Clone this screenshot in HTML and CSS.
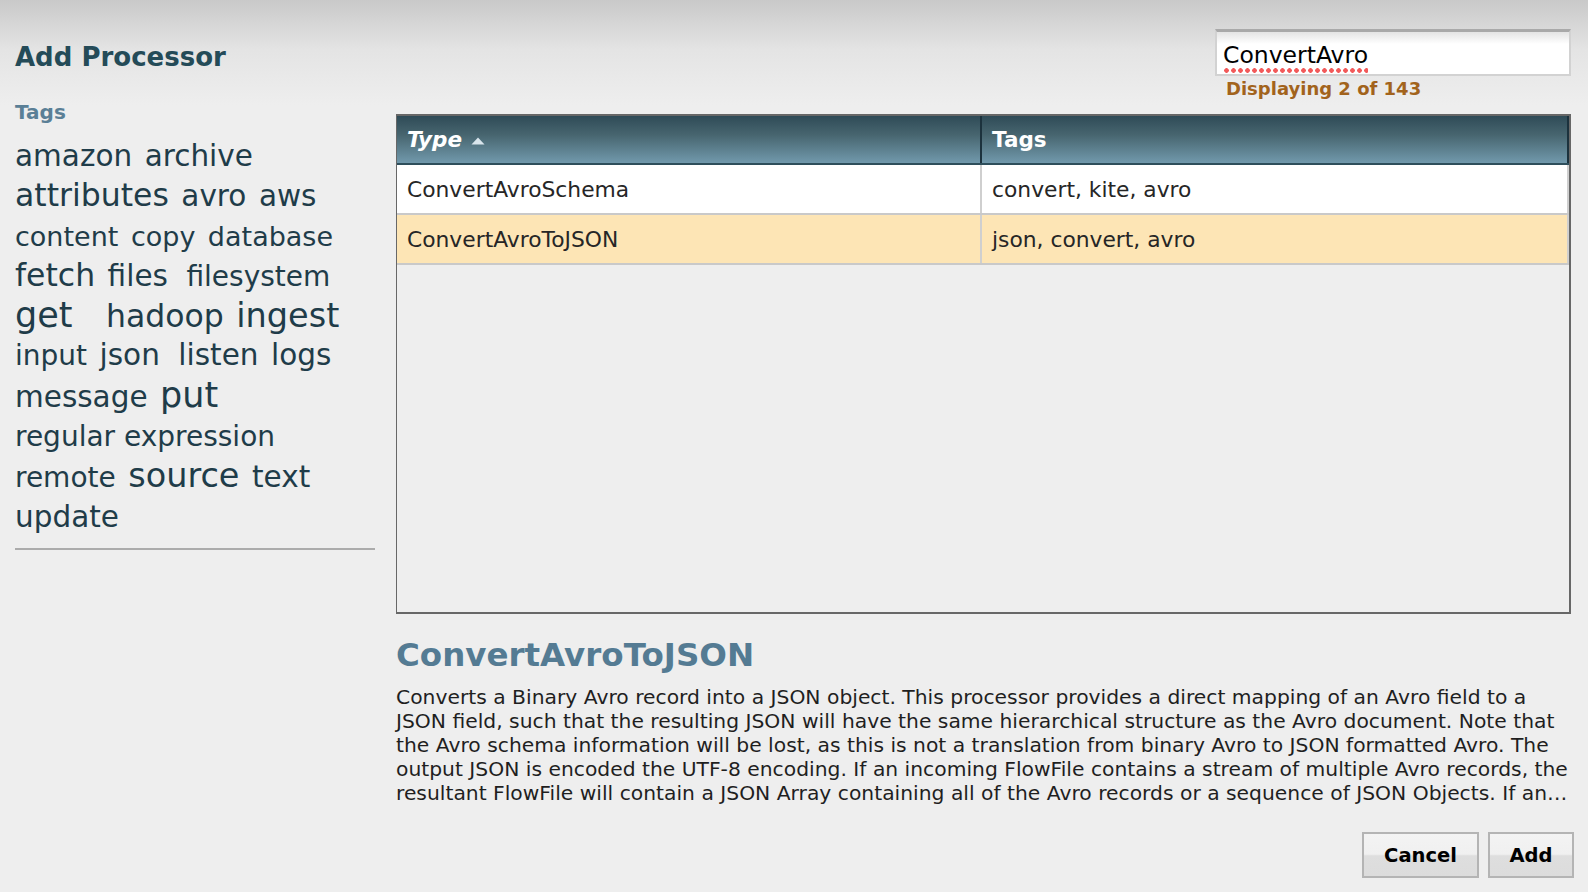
FILE: index.html
```html
<!DOCTYPE html>
<html lang="en">
<head>
<meta charset="utf-8">
<title>Add Processor</title>
<link rel="stylesheet" href="styles.css">
</head>
<body>
<div class="dialog">
  <aside class="side">
    <h1 class="title">Add Processor</h1>
    <div class="tags-label">Tags</div>
    <ul class="cloud">
      <li class="t2">amazon</li>
      <li class="t2">archive</li>
      <li class="t3">attributes</li>
      <li class="t2">avro</li>
      <li class="t2">aws</li>
      <li class="t0">content</li>
      <li class="t0">copy</li>
      <li class="t0">database</li>
      <li class="t3">fetch</li>
      <li class="t2">files</li>
      <li class="t1 wide">filesystem</li>
      <li class="t5">get</li>
      <li class="t3 xwide">hadoop</li>
      <li class="t4">ingest</li>
      <li class="t1">input</li>
      <li class="t2">json</li>
      <li class="t2 wide">listen</li>
      <li class="t2">logs</li>
      <li class="t2">message</li>
      <li class="t5">put</li>
      <li class="t1">regular expression</li>
      <li class="t1">remote</li>
      <li class="t4">source</li>
      <li class="t2">text</li>
      <li class="t2">update</li>
    </ul>
    <hr class="rule">
  </aside>
  <main class="main">
    <div class="search">
      <div class="search-box"><span class="misspelt">ConvertAvro</span></div>
      <div class="count">Displaying 2 of 143</div>
    </div>
    <div class="grid">
      <table class="types">
        <thead>
          <tr>
            <th class="col-type"><span class="sorted">Type</span><svg class="sort" width="14" height="8" viewBox="0 0 14 8"><polygon points="7,0.5 13.5,7.5 0.5,7.5" fill="#d9e5ec"/></svg></th>
            <th class="col-tags">Tags</th>
          </tr>
        </thead>
        <tbody>
          <tr>
            <td class="col-type">ConvertAvroSchema</td>
            <td class="col-tags">convert, kite, avro</td>
          </tr>
          <tr class="selected">
            <td class="col-type">ConvertAvroToJSON</td>
            <td class="col-tags">json, convert, avro</td>
          </tr>
        </tbody>
      </table>
    </div>
    <h2 class="desc-title">ConvertAvroToJSON</h2>
    <p class="desc">Converts a Binary Avro record into a JSON object. This processor provides a direct mapping of an Avro field to a<br>JSON field, such that the resulting JSON will have the same hierarchical structure as the Avro document. Note that<br>the Avro schema information will be lost, as this is not a translation from binary Avro to JSON formatted Avro. The<br>output JSON is encoded the UTF-8 encoding. If an incoming FlowFile contains a stream of multiple Avro records, the<br>resultant FlowFile will contain a JSON Array containing all of the Avro records or a sequence of JSON Objects. If an&hellip;</p>
    <div class="actions">
      <button class="btn">Cancel</button>
      <button class="btn btn-add">Add</button>
    </div>
  </main>
</div>
</body>
</html>
```
FILE: styles.css
```css
* { box-sizing: border-box; }

html, body {
  margin: 0;
  padding: 0;
  height: 892px;
  overflow: hidden;
}

body {
  font-family: "DejaVu Sans", Verdana, sans-serif;
  background: linear-gradient(#c9c9c9 0px, #e4e4e4 50px, #eeeeee 105px) no-repeat, #eeeeee;
  color: #262626;
}

.dialog {
  display: grid;
  grid-template-columns: 360px 1fr;
  column-gap: 21px;
  padding: 0 17px 0 15px;
  height: 892px;
}

/* ---------- left side ---------- */
.side {
  display: flex;
  flex-direction: column;
}

.title {
  margin: 41px 0 0;
  font-size: 26px;
  line-height: 32px;
  font-weight: bold;
  color: #244b58;
}

.tags-label {
  margin-top: 27px;
  font-size: 20px;
  line-height: 24px;
  font-weight: bold;
  color: #5a7f96;
}

.cloud {
  list-style: none;
  margin: 13px 0 0;
  padding: 0;
  display: flex;
  flex-wrap: wrap;
  align-items: baseline;
  column-gap: 12.5px;
  line-height: 39.3px;
  color: #1f3c49;
}

.cloud li { white-space: nowrap; }
.cloud .t0 { font-size: 27px; }
.cloud .t1 { font-size: 28px; }
.cloud .t2 { font-size: 29.5px; }
.cloud .t3 { font-size: 31.5px; }
.cloud .t4 { font-size: 33.5px; }
.cloud .t5 { font-size: 35px; }
.cloud .wide { margin-left: 6px; }
.cloud .xwide { margin-left: 21px; }

.rule {
  margin: 11px 0 0;
  border: 0;
  height: 2px;
  background: #ababab;
}

/* ---------- right side ---------- */
.main {
  display: flex;
  flex-direction: column;
  min-width: 0;
}

.search {
  align-self: flex-end;
  margin-top: 29px;
  width: 356px;
}

.search-box {
  height: 47px;
  border: 2px solid #d2d2d2;
  border-top: 3px solid #a9a9a9;
  background: linear-gradient(#e4e4e4 0, #ffffff 12px);
  padding: 9px 0 0 6px;
  font-size: 23.5px;
  line-height: 28px;
  color: #000;
}

.misspelt {
  padding-bottom: 4px;
  background-image: radial-gradient(circle, #f25a5a 2px, rgba(242, 90, 90, 0) 2.6px);
  background-size: 7px 5px;
  background-repeat: repeat-x;
  background-position: 0 100%;
}

.count {
  margin-top: 2px;
  padding-left: 11px;
  font-size: 18px;
  line-height: 22px;
  font-weight: bold;
  color: #a2631c;
}

.grid {
  margin-top: 14px;
  height: 500px;
  border: 2px solid #676767;
  border-left-width: 1px;
  background: #eeeeee;
}

.types {
  width: 100%;
  border-collapse: collapse;
  table-layout: fixed;
}

.types .col-type { width: 584px; }

.types th {
  height: 48px;
  padding: 0 10px;
  text-align: left;
  font-size: 21.5px;
  font-weight: bold;
  color: #ffffff;
  background: linear-gradient(#2f4b57 0%, #47656f 40%, #7199ac 100%);
  border-bottom: 2px solid #2e4e5b;
  border-right: 2px solid #1c323d;
  vertical-align: middle;
}

.sorted { font-style: italic; }

.sort {
  margin-left: 9px;
  vertical-align: 2px;
}

.types td {
  height: 50px;
  padding: 0 10px;
  font-size: 21.8px;
  color: #262626;
  background: #ffffff;
  border-bottom: 2px solid #c9c9c9;
  border-right: 2px solid #cfcfcf;
  vertical-align: middle;
  white-space: nowrap;
}

.types tr.selected td { background: #fde5b5; }

.desc-title {
  margin: 22px 0 0;
  font-size: 32.5px;
  line-height: 38px;
  font-weight: bold;
  color: #547b93;
}

.desc {
  margin: 11px 0 0;
  font-size: 20.3px;
  line-height: 24px;
  color: #1f1f1f;
  white-space: nowrap;
}

.actions {
  margin-top: auto;
  margin-right: -3px;
  padding-bottom: 14px;
  display: flex;
  justify-content: flex-end;
  gap: 9px;
}

.btn {
  height: 46px;
  padding: 0;
  width: 117px;
  border: 2px solid #b4b4b4;
  background: linear-gradient(#f3f3f3 0%, #f0f0f0 48%, #dedede 52%, #dcdcdc 100%);
  font-family: "DejaVu Sans", Verdana, sans-serif;
  font-size: 19.5px;
  font-weight: bold;
  color: #000;
}

.btn-add { width: 86px; }
```
